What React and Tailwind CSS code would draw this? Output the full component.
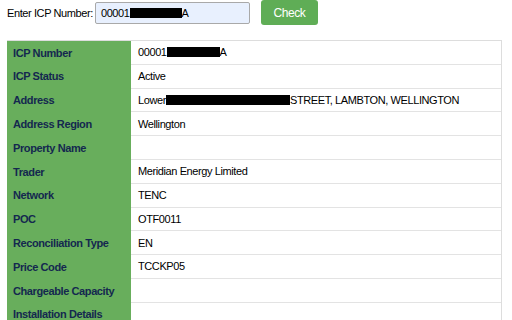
const ROWS = [
  { label: 'ICP Number', value: 'icp' },
  { label: 'ICP Status', value: 'Active' },
  { label: 'Address', value: 'address' },
  { label: 'Address Region', value: 'Wellington' },
  { label: 'Property Name', value: '' },
  { label: 'Trader', value: 'Meridian Energy Limited' },
  { label: 'Network', value: 'TENC' },
  { label: 'POC', value: 'OTF0011' },
  { label: 'Reconciliation Type', value: 'EN' },
  { label: 'Price Code', value: 'TCCKP05' },
  { label: 'Chargeable Capacity', value: '' },
  { label: 'Installation Details', value: '' },
]

function Redacted({ w }) {
  return <span className="inline-block h-[10px] bg-black" style={{ width: w }} />
}

function Value({ value }) {
  if (value === 'icp') {
    return (
      <span className="flex items-center">
        00001<Redacted w={53} />A
      </span>
    )
  }
  if (value === 'address') {
    return (
      <span className="flex items-center">
        Lower<Redacted w={124} />STREET, LAMBTON, WELLINGTON
      </span>
    )
  }
  return value
}

export default function App() {
  return (
    <div className="w-[512px] h-[320px] overflow-hidden bg-white text-[11px] tracking-[-0.4px] text-black font-['Liberation_Sans',Arial,sans-serif]">
      <div className="flex items-center h-[26px] pl-[7px]">
        <span className="mr-[2px]">Enter ICP Number:</span>
        <div className="flex items-center w-[155px] h-[22px] px-[5px] border border-[#a9a9a9] rounded-[2px] bg-[#e8f0fe]">
          00001<Redacted w={52} />A
        </div>
        <button className="ml-[11px] w-[57px] h-[25px] -mt-[1px] rounded-[3px] bg-[#5fad56] text-white text-[12px]">
          Check
        </button>
      </div>
      <div className="mt-[14px] ml-[7px] w-[495px] border-t border-r border-[#dddddd]">
        {ROWS.map(row => (
          <div key={row.label} className="flex h-[23.8px]">
            <div className="w-[124px] shrink-0 bg-[#68ae5c] pl-[6px] flex items-center font-bold text-[#14284f]">
              {row.label}
            </div>
            <div className="flex-1 flex items-center pl-[7px] border-b border-[#e3e3e3]">
              <Value value={row.value} />
            </div>
          </div>
        ))}
      </div>
    </div>
  )
}
